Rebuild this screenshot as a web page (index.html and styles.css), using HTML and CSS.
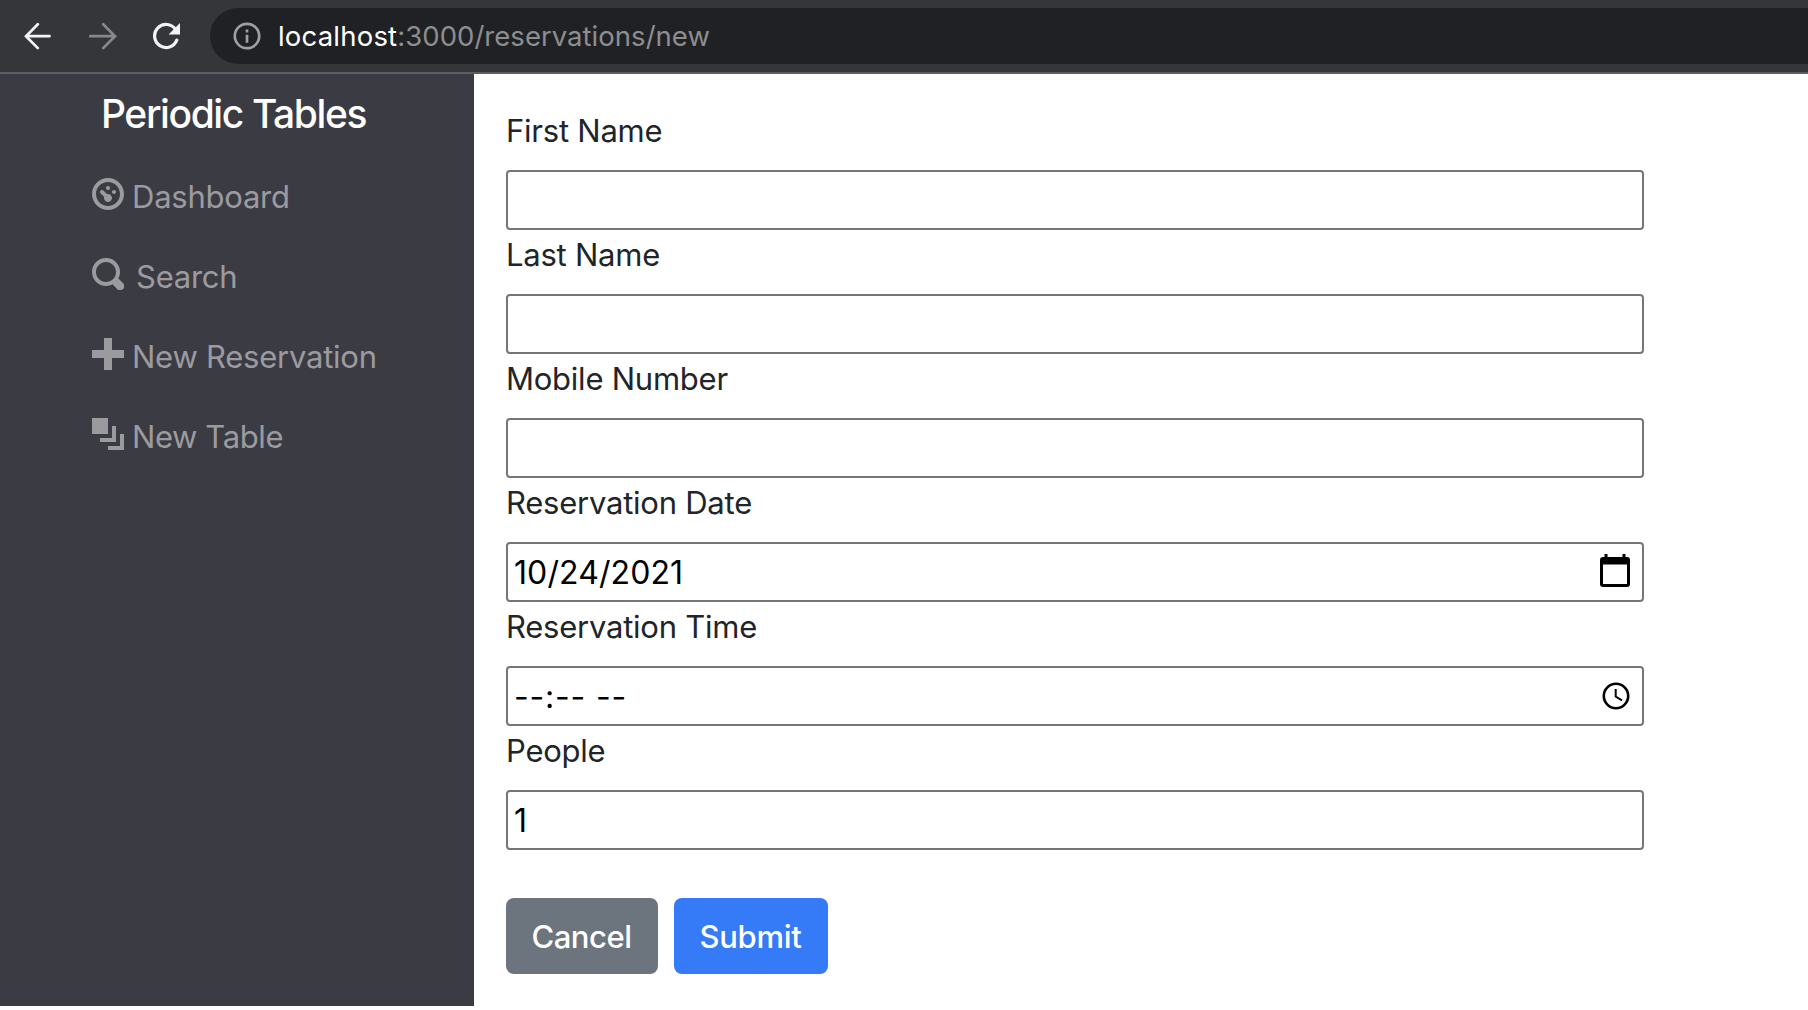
FILE: index.html
```
<!DOCTYPE html>
<html lang="en">
<head>
<meta charset="utf-8">
<title>Periodic Tables</title>
<link rel="stylesheet" href="styles.css">
</head>
<body>
<header class="toolbar">
  <svg class="tool back" viewBox="0 0 28 28" width="28" height="28"><path d="M25.5 14.2H2.5M13.8 2.3 2 14.2l11.8 11.9"/></svg>
  <svg class="tool forward" viewBox="0 0 28 28" width="28" height="28"><path d="M1 14.2h23.5M14.2 2.3 26 14.2 14.2 26.1"/></svg>
  <svg class="tool reload" viewBox="0 0 28 28" width="28" height="28"><path d="M23.8 18.2A11.5 11.5 0 1 1 22.6 7.5" /><path class="solid" d="M27 1v11.4H15.6z"/></svg>
  <div class="address">
    <svg class="info" viewBox="0 0 28 28" width="28" height="28"><circle cx="14" cy="14" r="12.2"/><path d="M14 12.8v8M14 7.5v3"/></svg>
    <span class="url"><span class="host">localhost</span>:3000/reservations/new</span>
  </div>
</header>
<div class="page">
  <nav class="sidebar">
    <a class="brand">Periodic Tables</a>
    <ul class="menu">
      <li><a class="item"><svg class="oi" viewBox="0 0 8 8"><path d="M4 0c-2.2 0-4 1.8-4 4s1.8 4 4 4 4-1.8 4-4-1.8-4-4-4zm0 1c1.66 0 3 1.34 3 3s-1.34 3-3 3-3-1.34-3-3 1.34-3 3-3zm0 1c-.28 0-.5.22-.5.5s.22.5.5.5.5-.22.5-.5-.22-.5-.5-.5zm-1.66 1a.5.5 0 0 0-.19.84l.91.91c-.02.08-.06.16-.06.25 0 .55.45 1 1 1s1-.45 1-1-.45-1-1-1c-.09 0-.17.04-.25.06l-.91-.91a.5.5 0 0 0-.44-.16.5.5 0 0 0-.06 0zm3.16 0c-.28 0-.5.22-.5.5s.22.5.5.5.5-.22.5-.5-.22-.5-.5-.5z"/></svg><span>Dashboard</span></a></li>
      <li><a class="item search"><svg class="oi" viewBox="0 0 8 8"><path d="M3.5 0c-1.93 0-3.5 1.57-3.5 3.5s1.57 3.5 3.5 3.5c.59 0 1.17-.14 1.66-.41a1 1 0 0 0 .13.13l1 1a1.02 1.02 0 1 0 1.44-1.44l-1-1a1 1 0 0 0-.16-.13c.27-.49.44-1.06.44-1.66 0-1.93-1.55-3.5-3.5-3.5zm0 1c1.39 0 2.5 1.11 2.5 2.5 0 .66-.24 1.27-.66 1.72-.01.01-.02.02-.03.03a1 1 0 0 0-.13.13c-.44.4-1.04.63-1.69.63-1.39 0-2.5-1.11-2.5-2.5s1.11-2.5 2.5-2.5z"/></svg><span>Search</span></a></li>
      <li><a class="item"><svg class="oi" viewBox="0 0 8 8"><path d="M3 0v3h-3v2h3v3h2v-3h3v-2h-3v-3h-2z"/></svg><span>New Reservation</span></a></li>
      <li><a class="item table"><svg class="oi" viewBox="0 0 8 8"><path d="M0 0v4h4v-4h-4zm5 2v3h-3v1h4v-4h-1zm2 2v3h-3v1h4v-4h-1z"/></svg><span>New Table</span></a></li>
    </ul>
  </nav>
  <main class="content">
    <form class="form">
      <label for="first">First Name</label>
      <div class="control"><input id="first" type="text"></div>
      <label for="last">Last Name</label>
      <div class="control"><input id="last" type="text"></div>
      <label for="mobile">Mobile Number</label>
      <div class="control"><input id="mobile" type="text"></div>
      <label for="date">Reservation Date</label>
      <div class="control date"><input id="date" type="text" value="10/24/2021">
        <svg class="picker" viewBox="0 0 30 36" width="30" height="36"><path d="M3 4h1.500V1h3v3h15V1h3v3H27q3 0 3 3v24q0 3-3 3H3q-3 0-3-3V7q0-3 3-3zM3 11.500v19.500h24V11.500z" fill-rule="evenodd"/></svg></div>
      <label for="time">Reservation Time</label>
      <div class="control time"><input id="time" type="text" value="--:-- --">
        <svg class="picker clock" viewBox="0 0 28 28" width="28" height="28"><circle cx="14" cy="14" r="12.200"/><path class="hands" d="M13.700 7v7.500l6.300 3.800"/></svg></div>
      <label for="people">People</label>
      <div class="control"><input id="people" type="text" value="1"></div>
      <div class="actions">
        <button type="button" class="btn cancel">Cancel</button>
        <button type="button" class="btn submit">Submit</button>
      </div>
    </form>
  </main>
</div>
</body>
</html>
```
FILE: styles.css
```
* { box-sizing: border-box; }

body {
  margin: 0;
  height: 1010px;
  overflow: hidden;
  background: #fff;
  color: #212529;
  font-family: Inter, "Liberation Sans", sans-serif;
  font-size: 31px;
  line-height: 48px;
  letter-spacing: -0.24px;
}

.toolbar {
  display: flex;
  align-items: center;
  height: 74px;
  padding: 0 0 0 25px;
  background: #35363a;
  border-bottom: 2px solid #5d5e62;
}

.tool { flex: none; margin-right: 36px; fill: none; stroke: #f1f3f4; stroke-width: 2.7; stroke-linecap: round; }
.back { margin-left: -1px; margin-right: 37px; }
.forward { stroke: #87888a; }
.reload { margin-right: 29px; stroke-width: 3.2; }
.reload .solid { fill: #f1f3f4; stroke: none; }

.address {
  flex: 1;
  display: flex;
  align-items: center;
  gap: 17px;
  height: 56px;
  padding-left: 23px;
  background: #202124;
  border-radius: 28px 0 0 28px;
}

.info { fill: none; stroke: #9aa0a6; stroke-width: 2.7; }
.url { color: #8d8e90; font-size: 27.500px; letter-spacing: 0.03px; }
.host { color: #fff; letter-spacing: 0.200px; }

.page { display: flex; height: 932px; }

.sidebar {
  flex: none;
  width: 474px;
  padding: 10px 0 0 92px;
  background: #3b3b44;
}

.brand {
  display: block;
  height: 60px;
  padding-left: 9px;
  color: #fff;
  font-size: 39px;
  font-weight: 450;
  line-height: 60px;
  letter-spacing: -1.400px;
}

.menu { margin: 12px 0 0; padding: 0; list-style: none; }
.item { display: flex; align-items: center; gap: 8px; height: 80px; color: #9b9b9f; }
.item span { padding-top: 2px; }
.search { gap: 12px; }
.table { letter-spacing: -0.400px; }
.oi { width: 32px; height: 32px; margin-bottom: 4px; fill: currentColor; }

.content { flex: 1; padding: 32px 164px 0 32px; }
.form { display: flex; flex-direction: column; }
label { height: 64px; padding-top: 1px; }

.control {
  display: flex;
  align-items: center;
  height: 60px;
  padding: 0 12px 0 6px;
  border: 2px solid #767676;
  border-radius: 4px;
}

.control input {
  flex: 1;
  min-width: 0;
  height: 56px;
  padding: 0;
  border: 0;
  outline: 0;
  background: none;
  color: #000;
  font: inherit;
  font-size: 32px;
  letter-spacing: 0.100px;
}

.time input { letter-spacing: 0.800px; }
.picker { flex: none; margin-bottom: 2px; }
.clock { margin: 0; fill: none; stroke: #000; stroke-width: 2.600; }
.hands { stroke-width: 2; }

.actions { display: flex; gap: 16px; margin-top: 48px; }

.btn {
  width: 152px;
  height: 76px;
  padding: 2px 1px 0 0;
  border: 0;
  border-radius: 8px;
  color: #fff;
  font: inherit;
  font-weight: 450;
  letter-spacing: -0.480px;
}

.cancel { background: #6c757d; }
.submit { width: 154px; background: #357af6; letter-spacing: -0.280px; }
```
